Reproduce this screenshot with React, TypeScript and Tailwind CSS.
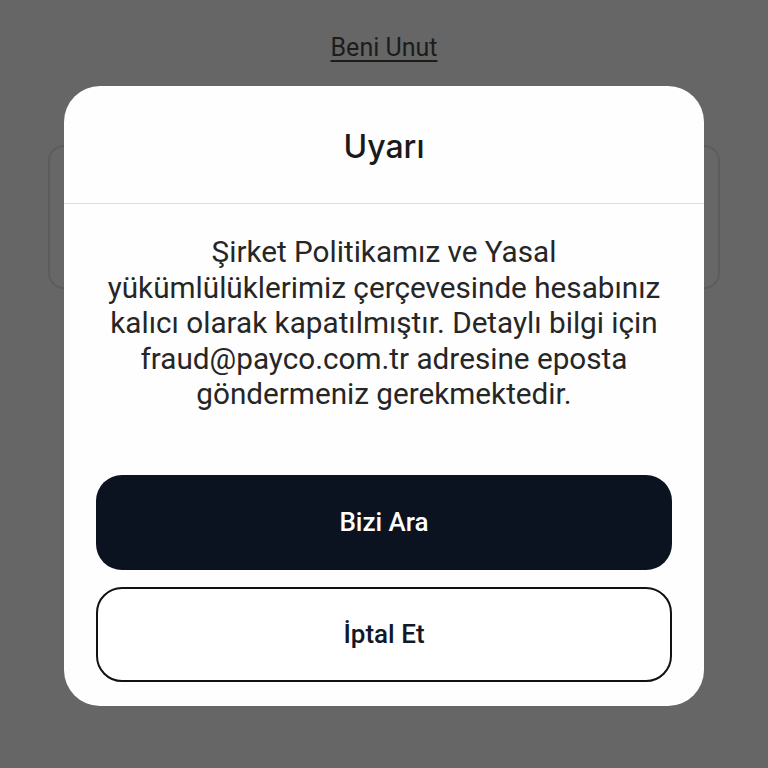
export default function App() {
  return (
    <div className="relative h-[768px] w-[768px] overflow-hidden bg-[#666666] font-['Roboto',sans-serif]">
      {/* page behind the overlay */}
      <div className="flex flex-col items-center pt-[33px]">
        <span className="text-[25px] leading-[30px] text-[#1c1c1c] underline underline-offset-[4px] decoration-[1.5px]">
          Beni Unut
        </span>
      </div>
      <div className="mx-12 mt-[82px] h-[144px] rounded-[16px] border-2 border-[#5c5c5c] bg-[#676767]" />

      {/* dialog */}
      <div className="absolute left-[64px] top-[86px] flex h-[620px] w-[640px] flex-col rounded-[36px] bg-[#fefefe]">
        <div className="flex h-[118px] items-center justify-center border-b border-[#dcdcdc] pt-1">
          <h2 className="font-['Inter',sans-serif] text-[32px] font-medium text-[#1a1a1a]">Uyarı</h2>
        </div>
        <div className="flex flex-1 flex-col px-8 pb-6">
          <p className="mt-[30px] whitespace-nowrap text-center text-[29.7px] leading-[35.5px] text-[#262626]">
            Şirket Politikamız ve Yasal
            <br />
            yükümlülüklerimiz çerçevesinde hesabınız
            <br />
            kalıcı olarak kapatılmıştır. Detaylı bilgi için
            <br />
            fraud@payco.com.tr adresine eposta
            <br />
            göndermeniz gerekmektedir.
          </p>
          <div className="mt-auto flex flex-col gap-[17px]">
            <button className="flex h-[95px] items-center justify-center rounded-[26px] bg-[#0b1220] text-[26px] font-medium text-white">
              Bizi Ara
            </button>
            <button className="flex h-[95px] items-center justify-center rounded-[26px] border-2 border-[#111111] bg-white text-[26px] font-medium text-[#111827]">
              İptal Et
            </button>
          </div>
        </div>
      </div>
    </div>
  );
}
